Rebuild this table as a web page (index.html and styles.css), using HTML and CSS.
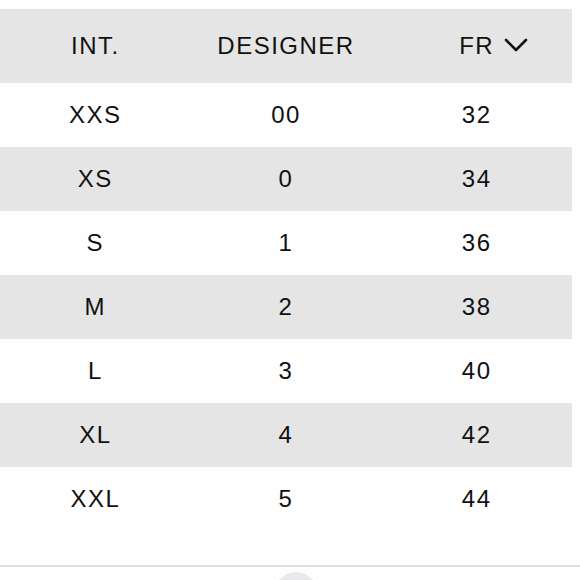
FILE: index.html
```html
<!DOCTYPE html>
<html>
<head>
<meta charset="utf-8">
<link rel="stylesheet" href="styles.css">
</head>
<body>
<div class="chart">
  <div class="row head">
    <div class="cell">INT.</div>
    <div class="cell">DESIGNER</div>
    <div class="cell"><span class="fr">FR<svg class="chev" width="24" height="16" viewBox="0 0 24 16"><path d="M2 3 L12 13 L22 3" fill="none" stroke="#111" stroke-width="2.6" stroke-linecap="round" stroke-linejoin="round"/></svg></span></div>
  </div>
  <div class="row"><div class="cell">XXS</div><div class="cell">00</div><div class="cell">32</div></div>
  <div class="row alt"><div class="cell">XS</div><div class="cell">0</div><div class="cell">34</div></div>
  <div class="row"><div class="cell">S</div><div class="cell">1</div><div class="cell">36</div></div>
  <div class="row alt"><div class="cell">M</div><div class="cell">2</div><div class="cell">38</div></div>
  <div class="row"><div class="cell">L</div><div class="cell">3</div><div class="cell">40</div></div>
  <div class="row alt"><div class="cell">XL</div><div class="cell">4</div><div class="cell">42</div></div>
  <div class="row"><div class="cell">XXL</div><div class="cell">5</div><div class="cell">44</div></div>
</div>
<div class="footer">
  <div class="handle"></div>
</div>
</body>
</html>
```
FILE: styles.css
```css
html, body {
  margin: 0;
  padding: 0;
  background: #fefefe;
  overflow: hidden;
}
body {
  width: 580px;
  height: 580px;
  font-family: "Liberation Sans", Arial, sans-serif;
  color: #111;
}
.chart {
  width: 572px;
  padding-top: 9px;
}
.row {
  display: grid;
  grid-template-columns: 1fr 1fr 1fr;
  height: 64px;
  align-items: center;
  font-size: 24px;
  letter-spacing: 1.5px;
}
.row.head {
  height: 74px;
  background: #e5e5e5;
}
.row.alt {
  background: #e5e5e5;
}
.cell {
  text-align: center;
}
.fr {
  position: relative;
}
.chev {
  position: absolute;
  left: 100%;
  top: 50%;
  margin-left: 10px;
  margin-top: -9px;
}
.footer {
  margin-top: 34px;
  border-top: 2px solid #dedede;
  display: flex;
  justify-content: center;
  padding-top: 5px;
  height: 8px;
  overflow: hidden;
}
.handle {
  flex: none;
  width: 44px;
  height: 44px;
  border-radius: 50%;
  background: #e9e9ec;
  margin-left: 12px;
}
```
